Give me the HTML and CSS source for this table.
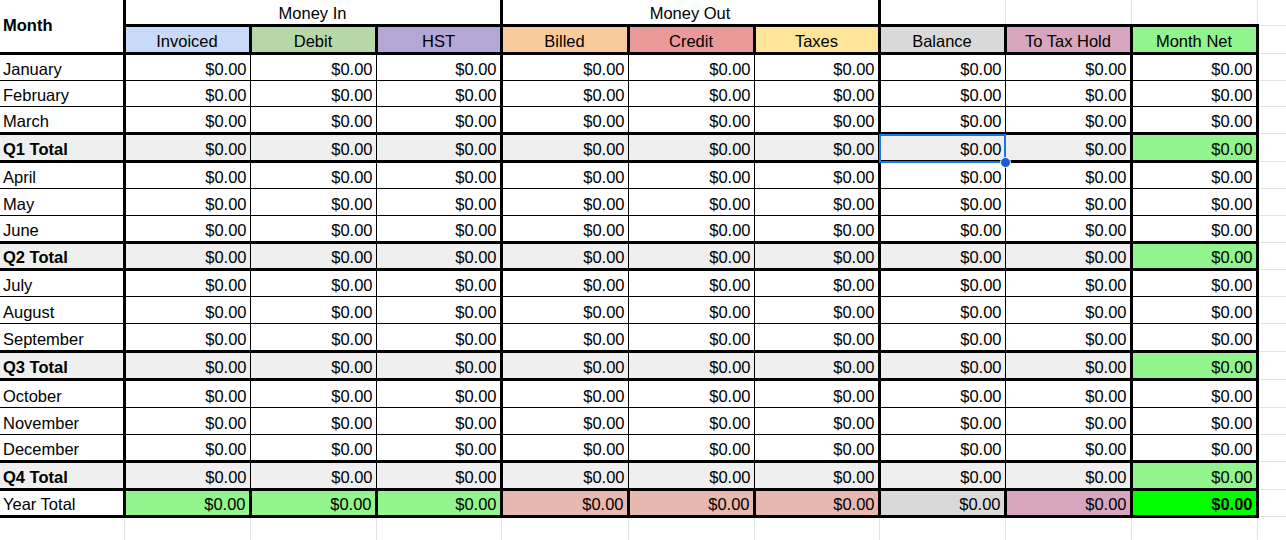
FILE: index.html
```html
<!DOCTYPE html>
<html>
<head>
<meta charset="utf-8">
<title>Monthly Budget</title>
<link rel="stylesheet" href="styles.css">
</head>
<body>
<div class="sheet">
<table class="grid">
<colgroup>
<col class="w124"><col class="w126"><col class="w126"><col class="w125"><col class="w127"><col class="w126"><col class="w125"><col class="w126"><col class="w126"><col class="w126"><col class="w126">
</colgroup>
<tr class="top h25">
<td class="month-head" rowspan="2">Month</td>
<td class="group" colspan="3">Money In</td>
<td class="group" colspan="3">Money Out</td>
<td class="blank"></td><td class="blank"></td><td class="blank"></td><td class="extra"></td>
</tr>
<tr class="heads h28">
<td class="hd invoiced">Invoiced</td>
<td class="hd debit">Debit</td>
<td class="hd hst">HST</td>
<td class="hd billed">Billed</td>
<td class="hd credit">Credit</td>
<td class="hd taxes">Taxes</td>
<td class="hd balance">Balance</td>
<td class="hd taxhold">To Tax Hold</td>
<td class="hd net">Month Net</td>
<td class="extra"></td>
</tr>
<tr class="m h27"><td>January</td><td>$0.00</td><td>$0.00</td><td>$0.00</td><td>$0.00</td><td>$0.00</td><td>$0.00</td><td>$0.00</td><td>$0.00</td><td>$0.00</td><td class="extra"></td></tr>
<tr class="m h26"><td>February</td><td>$0.00</td><td>$0.00</td><td>$0.00</td><td>$0.00</td><td>$0.00</td><td>$0.00</td><td>$0.00</td><td>$0.00</td><td>$0.00</td><td class="extra"></td></tr>
<tr class="m h27"><td>March</td><td>$0.00</td><td>$0.00</td><td>$0.00</td><td>$0.00</td><td>$0.00</td><td>$0.00</td><td>$0.00</td><td>$0.00</td><td>$0.00</td><td class="extra"></td></tr>
<tr class="q h28"><td>Q1 Total</td><td>$0.00</td><td>$0.00</td><td>$0.00</td><td>$0.00</td><td>$0.00</td><td>$0.00</td><td>$0.00</td><td>$0.00</td><td>$0.00</td><td class="extra"></td></tr>
<tr class="m h27"><td>April</td><td>$0.00</td><td>$0.00</td><td>$0.00</td><td>$0.00</td><td>$0.00</td><td>$0.00</td><td>$0.00</td><td>$0.00</td><td>$0.00</td><td class="extra"></td></tr>
<tr class="m h27"><td>May</td><td>$0.00</td><td>$0.00</td><td>$0.00</td><td>$0.00</td><td>$0.00</td><td>$0.00</td><td>$0.00</td><td>$0.00</td><td>$0.00</td><td class="extra"></td></tr>
<tr class="m h27"><td>June</td><td>$0.00</td><td>$0.00</td><td>$0.00</td><td>$0.00</td><td>$0.00</td><td>$0.00</td><td>$0.00</td><td>$0.00</td><td>$0.00</td><td class="extra"></td></tr>
<tr class="q h27"><td>Q2 Total</td><td>$0.00</td><td>$0.00</td><td>$0.00</td><td>$0.00</td><td>$0.00</td><td>$0.00</td><td>$0.00</td><td>$0.00</td><td>$0.00</td><td class="extra"></td></tr>
<tr class="m h27"><td>July</td><td>$0.00</td><td>$0.00</td><td>$0.00</td><td>$0.00</td><td>$0.00</td><td>$0.00</td><td>$0.00</td><td>$0.00</td><td>$0.00</td><td class="extra"></td></tr>
<tr class="m h27"><td>August</td><td>$0.00</td><td>$0.00</td><td>$0.00</td><td>$0.00</td><td>$0.00</td><td>$0.00</td><td>$0.00</td><td>$0.00</td><td>$0.00</td><td class="extra"></td></tr>
<tr class="m h28"><td>September</td><td>$0.00</td><td>$0.00</td><td>$0.00</td><td>$0.00</td><td>$0.00</td><td>$0.00</td><td>$0.00</td><td>$0.00</td><td>$0.00</td><td class="extra"></td></tr>
<tr class="q h28"><td>Q3 Total</td><td>$0.00</td><td>$0.00</td><td>$0.00</td><td>$0.00</td><td>$0.00</td><td>$0.00</td><td>$0.00</td><td>$0.00</td><td>$0.00</td><td class="extra"></td></tr>
<tr class="m h28"><td>October</td><td>$0.00</td><td>$0.00</td><td>$0.00</td><td>$0.00</td><td>$0.00</td><td>$0.00</td><td>$0.00</td><td>$0.00</td><td>$0.00</td><td class="extra"></td></tr>
<tr class="m h27"><td>November</td><td>$0.00</td><td>$0.00</td><td>$0.00</td><td>$0.00</td><td>$0.00</td><td>$0.00</td><td>$0.00</td><td>$0.00</td><td>$0.00</td><td class="extra"></td></tr>
<tr class="m h27"><td>December</td><td>$0.00</td><td>$0.00</td><td>$0.00</td><td>$0.00</td><td>$0.00</td><td>$0.00</td><td>$0.00</td><td>$0.00</td><td>$0.00</td><td class="extra"></td></tr>
<tr class="q h28"><td>Q4 Total</td><td>$0.00</td><td>$0.00</td><td>$0.00</td><td>$0.00</td><td>$0.00</td><td>$0.00</td><td>$0.00</td><td>$0.00</td><td>$0.00</td><td class="extra"></td></tr>
<tr class="yr h27"><td>Year Total</td><td class="in">$0.00</td><td class="in">$0.00</td><td class="in">$0.00</td><td class="out">$0.00</td><td class="out">$0.00</td><td class="out">$0.00</td><td class="balance">$0.00</td><td class="taxhold">$0.00</td><td class="total">$0.00</td><td class="extra"></td></tr>
<tr class="spare h27"><td></td><td></td><td></td><td></td><td></td><td></td><td></td><td></td><td></td><td></td><td class="extra"></td></tr>
</table>
<div class="selection"></div>
<div class="handle"></div>
</div>
</body>
</html>
```
FILE: styles.css
```css
html, body {
  margin: 0;
  padding: 0;
  background: #ffffff;
}
.sheet {
  position: relative;
  width: 1286px;
  height: 540px;
  overflow: hidden;
}
.grid {
  border-collapse: collapse;
  table-layout: fixed;
  width: 1383px;
  font-family: "Liberation Sans", Arial, sans-serif;
  font-size: 16.5px;
  color: #000000;
}
.w124 { width: 124px; }
.w125 { width: 125px; }
.w126 { width: 126px; }
.w127 { width: 127px; }
.h25 { height: 25px; }
.h26 { height: 26px; }
.h27 { height: 27px; }
.h28 { height: 28px; }

.grid td {
  padding: 0 3px 2px 3px;
  line-height: 18px;
  vertical-align: bottom;
  white-space: nowrap;
  overflow: hidden;
  border: 1px solid #000000;
  text-align: right;
}

/* top group row */
.month-head {
  font-weight: bold;
  text-align: left !important;
  vertical-align: middle !important;
  border-top: none !important;
  border-left: none !important;
  border-right: 3px solid #000 !important;
  border-bottom: 3px solid #000 !important;
}
.grid .group {
  text-align: center;
  border-top: none;
  border-right: 3px solid #000;
  border-bottom: 3px solid #000;
}
.grid .blank {
  border: 1px solid #e2e3e3;
  border-top: none;
  border-bottom: 3px solid #000;
}
.grid .extra {
  border: 1px solid #e2e3e3;
  background: #ffffff;
}
.top .extra { border-top: none; }

/* header row */
.grid .hd {
  text-align: center;
  border: 3px solid #000;
}
.invoiced { background: #c9daf8; }
.debit { background: #b6d7a8; }
.hst { background: #b4a7d6; }
.billed { background: #f9cb9c; }
.credit { background: #ea9999; }
.taxes { background: #ffe599; }
.grid .balance { background: #d9d9d9; }
.grid .taxhold { background: #d5a6bd; }
.net { background: #91f48d; }

/* data rows */
.m td:first-child,
.q td:first-child,
.yr td:first-child {
  text-align: left;
  border-left: none;
  border-right: 3px solid #000;
}
.m td:nth-child(4), .q td:nth-child(4),
.m td:nth-child(7), .q td:nth-child(7),
.m td:nth-child(9), .q td:nth-child(9),
.m td:nth-child(10), .q td:nth-child(10) {
  border-right: 3px solid #000;
}
.q td {
  background: #efefef;
  border-top: 3px solid #000;
  border-bottom: 3px solid #000;
}
.q td:first-child { font-weight: bold; }
.q td:nth-child(10) { background: #91f48d; }

.yr td {
  border: 3px solid #000;
}
.grid .yr td:first-child { border-left: none; }
.yr .in { background: #91f48d; }
.yr .out { background: #e6b8af; }
.yr .total { background: #00ff00; font-weight: bold; }

.grid .spare td {
  border: 1px solid #e2e3e3;
  border-bottom: none;
}
.grid .spare td:first-child { border-left: none; }

/* active cell overlay */
.selection {
  position: absolute;
  left: 879px;
  top: 134px;
  width: 127px;
  height: 29px;
  box-sizing: border-box;
  border: 2px solid #1a73e8;
  pointer-events: none;
}
.handle {
  position: absolute;
  left: 1000px;
  top: 157px;
  width: 11px;
  height: 11px;
  box-sizing: border-box;
  border-radius: 50%;
  background: #1a5fd6;
  border: 1px solid #ffffff;
}
```
